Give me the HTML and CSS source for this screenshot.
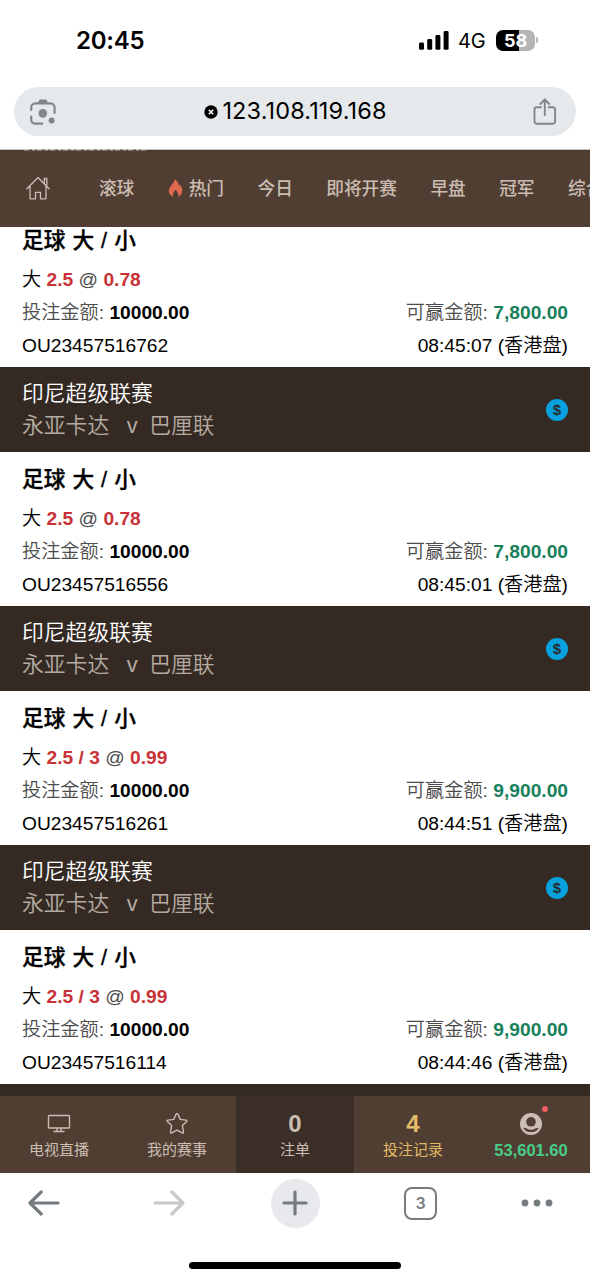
FILE: index.html
```html
<!DOCTYPE html>
<html lang="zh-CN">
<head>
<meta charset="utf-8">
<meta name="viewport" content="width=device-width, initial-scale=1">
<title>投注记录</title>
<link rel="stylesheet" href="styles.css">
</head>
<body>
<div class="phone">
  <header class="status">
    <span class="time">20:45</span>
    <div class="status-right">
      <svg class="signal" width="30" height="19" viewBox="0 0 30 19"><rect x="0" y="11.5" width="5" height="7.3" rx="1.4"/><rect x="8.2" y="8" width="5" height="10.8" rx="1.4"/><rect x="16.4" y="4" width="5" height="14.8" rx="1.4"/><rect x="24.6" y="0" width="5" height="18.8" rx="1.4"/></svg>
      <span class="network">4G</span>
      <span class="battery">58</span>
      <span class="battery-tip"></span>
    </div>
  </header>

  <div class="url-wrap">
    <div class="url-bar">
      <svg class="lens" width="26" height="26" viewBox="0 0 26 26"><g fill="none" stroke="#80868b" stroke-width="2.2" stroke-linecap="round"><path d="M1.2 11V8.5a4.2 4.2 0 0 1 4.2-4.2h15a4.2 4.2 0 0 1 4.2 4.2V14"/><path d="M1.2 17.5v3a4.2 4.2 0 0 0 4.2 4.2h6.8"/></g><path d="M7.4 4.5 9 1.4Q9.3.6 10.3.6h5.2q1 0 1.3.8l1.6 3.1z" fill="#80868b"/><circle cx="12.8" cy="14.4" r="4.3" fill="#80868b"/><circle cx="21.6" cy="21.5" r="3" fill="#80868b"/></svg>
      <div class="address">
        <svg width="14" height="14" viewBox="0 0 14 14"><circle cx="7" cy="7" r="6.7"/><path d="m4.8 4.8 4.4 4.4m0-4.4L4.8 9.2" stroke="#fff" stroke-width="1.6"/></svg>
        <span class="host">123.108.119.168</span>
      </div>
      <svg class="share" width="24" height="27" viewBox="0 0 24 27" fill="none" stroke="#80868b" stroke-width="1.9" stroke-linecap="round" stroke-linejoin="round"><path d="M8 9.2H3.8a2.3 2.3 0 0 0-2.3 2.3v12A2.3 2.3 0 0 0 3.8 25.800h16a2.300 2.300 0 0 0 2.300-2.300v-12a2.300 2.300 0 0 0-2.300-2.300h-4.200M11.800 17V2M7.300 6l4.500-4.500L16.300 6"/></svg>
    </div>
  </div>

  <div class="page-edge"><i class="edge-dashes"></i></div>
  <nav class="sports">
    <svg class="home" width="24" height="24" viewBox="0 0 24 24" fill="none" stroke="#cbbdb2" stroke-width="1.300" stroke-linejoin="round" stroke-linecap="round"><path d="M.9 12.700 12 1.500l11.100 11.200M18.300 7.800V2.500h2.500v7.800M4 10.500v12.300h5.500v-6.500h5v6.500H20V10.500"/></svg>
    <span>滚球</span>
    <span class="hot"><svg width="15" height="18" viewBox="0 0 15 18"><path fill="#e0694f" d="M6.500.3c3 2 4.400 4.500 4.300 7.200.6-.5 1-1.100 1.100-1.900 1.600 1.800 2.500 4 2.300 6.500-.2 2.900-1.900 4.900-4.200 5.600 1-2.200.3-4.400-2.500-7-2.500 2.600-3.200 4.800-2.200 7C2.700 17 .8 15 .8 12.100.8 9.600 2 8 3.600 6.100 5.300 4.100 6.600 2.600 6.500.3z"/></svg>热门</span>
    <span>今日</span>
    <span>即将开赛</span>
    <span>早盘</span>
    <span>冠军</span>
    <span>综合</span>
  </nav>

  <main class="bets">
    <section class="bet bet-first">
      <h2>足球 大 / 小</h2>
      <div class="row"><p class="pick">大 <b>2.5</b> <em>@</em> <b>0.78</b></p></div>
      <div class="row"><p><em>投注金额:</em> <strong>10000.00</strong></p><p><em>可赢金额:</em> <strong class="win">7,800.00</strong></p></div>
      <div class="row"><p>OU23457516762</p><p>08:45:07 (香港盘)</p></div>
    </section>

    <div class="match"><div><div class="league">印尼超级联赛</div><div class="teams"><span>永亚卡达</span><span class="vs">v</span><span>巴厘联</span></div></div><span class="coin">$</span></div>
    <section class="bet">
      <h2>足球 大 / 小</h2>
      <div class="row"><p class="pick">大 <b>2.5</b> <em>@</em> <b>0.78</b></p></div>
      <div class="row"><p><em>投注金额:</em> <strong>10000.00</strong></p><p><em>可赢金额:</em> <strong class="win">7,800.00</strong></p></div>
      <div class="row"><p>OU23457516556</p><p>08:45:01 (香港盘)</p></div>
    </section>

    <div class="match"><div><div class="league">印尼超级联赛</div><div class="teams"><span>永亚卡达</span><span class="vs">v</span><span>巴厘联</span></div></div><span class="coin">$</span></div>
    <section class="bet">
      <h2>足球 大 / 小</h2>
      <div class="row"><p class="pick">大 <b>2.5 / 3</b> <em>@</em> <b>0.99</b></p></div>
      <div class="row"><p><em>投注金额:</em> <strong>10000.00</strong></p><p><em>可赢金额:</em> <strong class="win">9,900.00</strong></p></div>
      <div class="row"><p>OU23457516261</p><p>08:44:51 (香港盘)</p></div>
    </section>

    <div class="match"><div><div class="league">印尼超级联赛</div><div class="teams"><span>永亚卡达</span><span class="vs">v</span><span>巴厘联</span></div></div><span class="coin">$</span></div>
    <section class="bet">
      <h2>足球 大 / 小</h2>
      <div class="row"><p class="pick">大 <b>2.5 / 3</b> <em>@</em> <b>0.99</b></p></div>
      <div class="row"><p><em>投注金额:</em> <strong>10000.00</strong></p><p><em>可赢金额:</em> <strong class="win">9,900.00</strong></p></div>
      <div class="row"><p>OU23457516114</p><p>08:44:46 (香港盘)</p></div>
    </section>
    <div class="next-match"></div>
  </main>

  <nav class="tabs">
    <div class="tab"><span class="tab-top"><svg width="24" height="22" viewBox="0 0 24 22" fill="none" stroke="#cbbdb2" stroke-width="1.400"><rect x="1.500" y="2.500" width="21" height="12.500" rx=".8"/><path d="M10 15v3m4-3v3M6.500 18.500h11"/></svg></span><span class="tab-label">电视直播</span></div>
    <div class="tab"><span class="tab-top"><svg width="24" height="24" viewBox="0 0 24 24" fill="none" stroke="#cbbdb2" stroke-width="1.400" stroke-linejoin="round"><path d="M12 1.700q.7 0 1 .7l2.300 5 5.800.7q1.400.3.5 1.400l-4.200 4.100 1.100 6.400q.1 1.500-1.200.9L12 18.100l-5.300 2.800q-1.300.6-1.200-.9l1.100-6.400L2.400 9.500q-.9-1.100.5-1.400l5.800-.7 2.300-5q.3-.7 1-.7z"/></svg></span><span class="tab-label">我的赛事</span></div>
    <div class="tab tab-slip"><span class="tab-top count">0</span><span class="tab-label">注单</span></div>
    <div class="tab tab-active"><span class="tab-top count">4</span><span class="tab-label">投注记录</span></div>
    <div class="tab"><span class="tab-top account"><svg width="22" height="22" viewBox="0 0 22 22"><circle cx="11" cy="11" r="11" fill="#cbbdb2"/><circle cx="11" cy="8.800" r="4.800" fill="#503e33"/><path d="M3.400 15.200q1.500-.8 2.700.1 4.900 3.100 9.800 0 1.200-.9 2.700-.1Q16 19.100 11 19.100t-7.600-3.900z" fill="#503e33"/></svg><i class="dot"></i></span><span class="balance">53,601.60</span></div>
  </nav>

  <footer class="browser">
    <div class="tools">
      <div class="tool"><svg width="32" height="26" viewBox="0 0 32 26" fill="none" stroke="#747c80" stroke-width="3.200" stroke-linecap="round" stroke-linejoin="round"><path d="M30 13H2M13.200 2 2 13l11.200 11"/></svg></div>
      <div class="tool"><svg width="32" height="26" viewBox="0 0 32 26" fill="none" stroke="#c6c8ca" stroke-width="3.200" stroke-linecap="round" stroke-linejoin="round"><path d="M2 13h28M18.800 2 30 13 18.800 24"/></svg></div>
      <div class="tool"><span class="new-tab"><svg width="26" height="26" viewBox="0 0 26 26" fill="none" stroke="#747c80" stroke-width="3.200" stroke-linecap="round"><path d="M13 2v22M2 13h22"/></svg></span></div>
      <div class="tool"><span class="tab-count">3</span></div>
      <div class="tool"><svg width="32" height="8" viewBox="0 0 32 8" fill="#747c80"><circle cx="4" cy="4" r="3.400"/><circle cx="16" cy="4" r="3.400"/><circle cx="28" cy="4" r="3.400"/></svg></div>
    </div>
    <div class="home-bar"></div>
  </footer>
</div>
</body>
</html>
```

FILE: styles.css
```css
* { box-sizing: border-box; }
body { margin: 0; background: #fff; font-family: "Liberation Sans", "Noto Sans CJK SC", sans-serif; color: #000; }
svg { display: block; flex: none; }
h2, p { margin: 0; }
em, i { font-style: normal; }
.phone { width: 590px; height: 1280px; overflow: hidden; display: flex; flex-direction: column; }

.status { height: 86px; flex: none; display: flex; justify-content: space-between; align-items: flex-start; padding: 24px 52px 0 76px; font-family: Inter, sans-serif; }
.time { font-size: 24px; line-height: 33px; font-weight: 600; letter-spacing: -0.25px; }
.status-right { display: flex; align-items: center; height: 32px; }
.network { font-size: 20px; line-height: 32px; margin: 2px 0 0 9px; letter-spacing: -0.2px; width: 28px; }
.battery { width: 39px; height: 21px; margin-left: 10px; border-radius: 7px; background: linear-gradient(90deg, #000 58%, #b5b5b5 58%); color: #fff; font-size: 18px; line-height: 21px; font-weight: 700; text-align: center; }
.battery-tip { width: 2px; height: 6px; margin-left: 1px; background: #b5b5b5; border-radius: 0 3px 3px 0; }

.url-wrap { height: 63px; flex: none; padding: 1px 14px 0; }
.url-bar { height: 49px; border-radius: 25px; background: #e6e9ec; display: flex; align-items: center; justify-content: space-between; padding: 0 19px 0 16px; }
.address { display: flex; align-items: center; gap: 4px; padding-left: 2px; }
.host { font-family: Inter, sans-serif; font-size: 23.500px; line-height: 32px; letter-spacing: 0.13px; margin-top: -2px; }

.page-edge { height: 2px; flex: none; background: linear-gradient(#c9c4c0 50%, #4a392e 50%); padding-left: 24px; }
.edge-dashes { display: block; width: 122px; height: 2px; background: repeating-linear-gradient(90deg, #d8d2cd 0 5px, #675950 5px 8px, #e5e1de 8px 11px, #7a6d65 11px 13px); opacity: .4; }
.sports { height: 76px; flex: none; background: #503e33; color: #cbbdb2; display: flex; align-items: center; padding: 0 0 1px 26px; overflow: hidden; font-family: "Noto Sans CJK SC", sans-serif; font-size: 17.700px; line-height: 26px; font-weight: 500; gap: 33.400px; white-space: nowrap; }
.sports span { flex: none; margin-top: -4px; }
.sports .hot svg { margin-top: 3px; }
.home { margin: -1px 15.500px 0 0; }
.hot { display: flex; align-items: center; gap: 6px; }

.bets { height: 869px; flex: none; overflow: hidden; }
.bet { height: 154px; padding: 5px 22px; }
.bet-first { margin-top: -14px; }
.bet h2 { font-family: "Liberation Sans", "Noto Sans CJK SC", sans-serif; font-size: 21.700px; line-height: 46px; height: 45px; font-weight: 500; word-spacing: 1px; -webkit-text-stroke: .35px #000; }
.row { display: flex; justify-content: space-between; height: 33px; line-height: 33px; font-size: 19.200px; white-space: nowrap; }
.row em { color: #4c4c4c; font-weight: 350; }
.row p { font-weight: 350; }
.pick b { color: #c93237; }
.win { color: #17805b; }
.match { height: 85px; background: #352a23; color: #fff; display: flex; align-items: center; justify-content: space-between; padding: 0 22px; font-size: 21.800px; line-height: 32px; font-weight: 350; }
.match > div { padding-top: 1px; }
.teams { display: flex; color: #b5aaa2; }
.vs { width: 40px; text-align: center; padding-left: 6px; }
.coin { width: 22px; height: 22px; border-radius: 50%; background: #06a1de; color: #272b2d; font-size: 15px; line-height: 22px; font-weight: 700; text-align: center; }
.next-match { height: 12px; background: #352a23; }

.tabs { height: 77px; flex: none; display: grid; grid-template-columns: repeat(5, 118px); background: #503e33; color: #cbbdb2; font-family: "Liberation Sans", "Noto Sans CJK SC", sans-serif; }
.tab { display: flex; flex-direction: column; align-items: center; padding-top: 15px; }
.tab-top { height: 25px; display: flex; align-items: center; }
.tab-label { font-size: 15px; line-height: 28px; }
.tab-slip { background: #3a2e27; }
.tab-active { color: #e3bc67; }
.count { font-size: 24px; font-weight: 700; }
.account { position: relative; }
.dot { position: absolute; right: -6px; top: -5px; width: 6px; height: 6px; border-radius: 50%; background: #f05c61; }
.balance { color: #49ce87; font-size: 16.500px; line-height: 29px; font-weight: 700; }

.browser { flex: 1; display: flex; flex-direction: column; align-items: center; }
.tools { width: 100%; height: 60px; display: grid; grid-template-columns: 87px 164px 88px 163px 69px; align-items: center; }
.tool { display: flex; justify-content: center; }
.new-tab { width: 49px; height: 49px; flex: none; border-radius: 50%; background: #e8e9ed; display: flex; align-items: center; justify-content: center; }
.tab-count { width: 33px; height: 33px; border: 2.500px solid #747c80; border-radius: 8px; color: #747c80; font: 600 16px/28px Inter, sans-serif; text-align: center; }
.home-bar { width: 212px; height: 7px; border-radius: 4px; background: #000; margin-top: 29px; }
```
